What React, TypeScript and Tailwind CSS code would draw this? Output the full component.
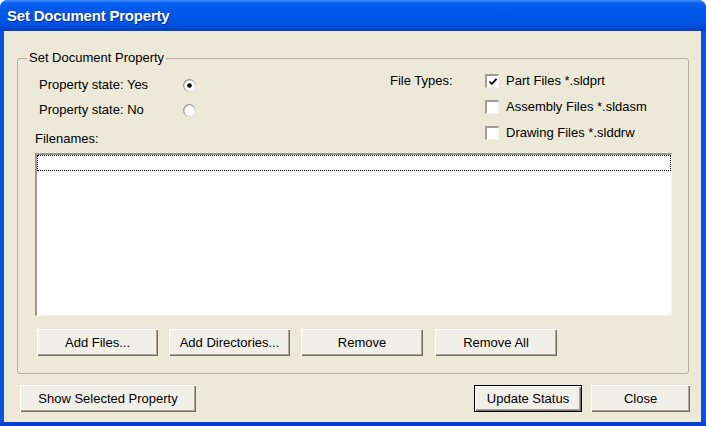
import { useId } from 'react';

function Radio({ checked = false }: { checked?: boolean }) {
  const id = useId();
  return (
    <svg width="13" height="13" viewBox="0 0 13 13" className="shrink-0">
      <defs>
        <linearGradient id={id} x1="0" y1="0" x2="1" y2="1">
          <stop offset="0" stopColor="#7d7b70" />
          <stop offset="0.5" stopColor="#b9b7ab" />
          <stop offset="1" stopColor="#ffffff" />
        </linearGradient>
      </defs>
      <circle cx="6.5" cy="6.5" r="5.8" fill="#ffffff" stroke={`url(#${id})`} strokeWidth="1.3" />
      {checked && <circle cx="6.5" cy="6.5" r="2.3" fill="#000000" />}
    </svg>
  );
}

function Check({ checked = false, label }: { checked?: boolean; label: string }) {
  return (
    <div className="flex items-center h-[26px]">
      <div className="w-[14px] h-[14px] bg-white border-t-2 border-l-2 border-[#a09e92] border-b border-r border-b-[#f4f3ee] border-r-[#f4f3ee] flex items-center justify-center">
        {checked && (
          <svg width="10" height="10" viewBox="0 0 10 10">
            <polyline points="1.5,4.5 3.8,7 8.5,1.8" fill="none" stroke="#000" strokeWidth="1.8" />
          </svg>
        )}
      </div>
      <span className="ml-[7px]">{label}</span>
    </div>
  );
}

function Btn({ children, className = '', isDefault = false }: { children: string; className?: string; isDefault?: boolean }) {
  return (
    <button
      className={`h-[27px] flex items-center justify-center bg-[#f1f0e8] text-[13px] text-black ${
        isDefault
          ? 'border border-black shadow-[inset_1px_1px_0_#ffffff,inset_-1px_-1px_0_#716f64,inset_-2px_-2px_0_#aca899]'
          : 'shadow-[inset_1px_1px_0_#ffffff,inset_-1px_-1px_0_#716f64,inset_-2px_-2px_0_#aca899]'
      } ${className}`}
    >
      {children}
    </button>
  );
}

export default function App() {
  return (
    <div className="w-[706px] h-[426px] bg-[#0753e4] rounded-t-[8px] overflow-hidden flex flex-col font-['Liberation_Sans',Arial,sans-serif] text-[13px] text-black">
      {/* title bar */}
      <div className="h-[31px] shrink-0 pl-[7px] pt-[11px] bg-[linear-gradient(to_bottom,#3d8ef8_0px,#0a60f0_3px,#0058ec_10px,#0053e2_24px,#0047d2_28px,#003cc0_31px)]">
        <div className="text-[15px] leading-[17px] -mt-[4px] font-bold tracking-[-0.2px] text-white [text-shadow:1px_1px_0_#0a2a9a]">
          Set Document Property
        </div>
      </div>

      <div className="ml-[4px] mr-[5px] h-[391px] bg-[#ece9d8] flex flex-col">
        {/* group box */}
        <div className="relative mt-[27px] ml-[13px] w-[672px] h-[316px] border border-[#b3b0a1] rounded-[3px]">
          <span className="absolute -top-[9px] left-[9px] px-[2px] bg-[#ece9d8] leading-[16px]">
            Set Document Property
          </span>

          <div className="flex h-[94px]">
            <div className="w-[372px] pl-[17px] pt-[14px]">
              <div className="flex items-center h-[24px] pl-[4px]">
                <span className="w-[144px]">Property state: Yes</span>
                <Radio checked />
              </div>
              <div className="flex items-center h-[26px] pl-[4px]">
                <span className="w-[144px]">Property state: No</span>
                <Radio />
              </div>
              <div className="mt-[7px] h-[18px] flex items-center">Filenames:</div>
            </div>
            <div className="flex pt-[9px]">
              <div className="w-[95px] h-[26px] flex items-center">File Types:</div>
              <div className="flex flex-col">
                <Check checked label="Part Files *.sldprt" />
                <Check label="Assembly Files *.sldasm" />
                <Check label="Drawing Files *.slddrw" />
              </div>
            </div>
          </div>

          {/* file list */}
          <div className="ml-[17px] w-[637px] h-[163px] bg-white border-t-2 border-l-2 border-[#9a988c] border-b border-r border-b-[#f4f3ee] border-r-[#f4f3ee]">
            <div className="h-[16px] w-full border border-dotted border-black" />
          </div>

          <div className="flex mt-[13px] ml-[19px]">
            <Btn className="w-[121px]">Add Files...</Btn>
            <Btn className="w-[121px] ml-[11px]">Add Directories...</Btn>
            <Btn className="w-[122px] ml-[11px]">Remove</Btn>
            <Btn className="w-[122px] ml-[12px]">Remove All</Btn>
          </div>
        </div>

        <div className="flex mt-[11px] ml-[16px] mr-[11px]">
          <Btn className="w-[176px]">Show Selected Property</Btn>
          <Btn isDefault className="w-[108px] ml-auto">Update Status</Btn>
          <Btn className="w-[99px] ml-[9px]">Close</Btn>
        </div>
      </div>
      <div className="flex-1 bg-[#0440cf]" />
    </div>
  );
}
